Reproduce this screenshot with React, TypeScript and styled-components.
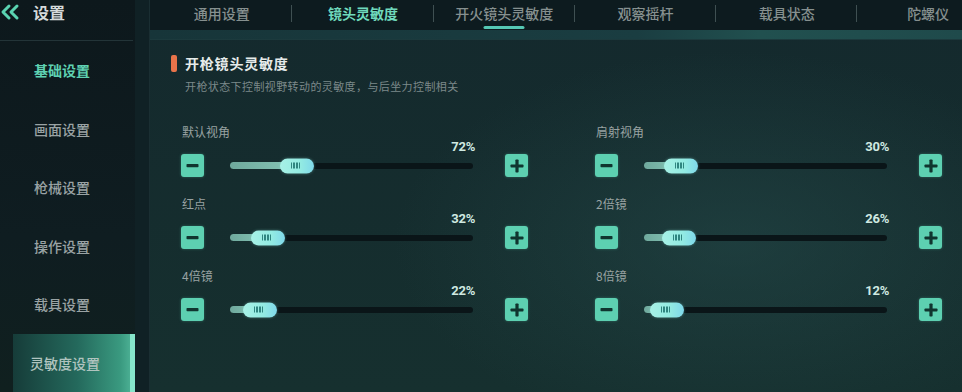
import React from "react";
import styled, { createGlobalStyle } from "styled-components";

const Global = createGlobalStyle`
  html, body { margin: 0; padding: 0; background: #0f1c20; }
  body { font-family: "Noto Sans CJK SC", "Noto Sans", sans-serif; }
  * { box-sizing: border-box; }
`;

const Screen = styled.div`
  width: 962px;
  height: 392px;
  display: flex;
  overflow: hidden;
  background: #0f1c20;
`;

const Sidebar = styled.aside`
  width: 135px;
  flex-shrink: 0;
  display: flex;
  flex-direction: column;
  background: linear-gradient(180deg, #0d181c 0%, #0f1d21 60%, #10201f 100%);
`;

const SideHeader = styled.div`
  height: 41px;
  display: flex;
  align-items: flex-start;
  padding-top: 2px;
  gap: 13px;
  border-bottom: 1px solid #233438;
  margin-right: 2px;
`;

const HeaderTitle = styled.span`
  font-size: 16px;
  font-weight: 700;
  color: #d5dadb;
  line-height: 20px;
`;

const SideItem = styled.div<{ $active?: boolean; $selected?: boolean }>`
  height: 58.6px;
  display: flex;
  align-items: center;
  justify-content: center;
  padding-right: ${(p) => (p.$selected ? "0" : "11px")};
  margin-left: ${(p) => (p.$selected ? "13px" : "0")};
  font-size: 14px;
  font-weight: ${(p) => (p.$active ? 700 : 500)};
  color: ${(p) => (p.$active ? "#5fd2b2" : p.$selected ? "#b0c4bf" : "#9aa3a4")};
  background: ${(p) =>
    p.$selected
      ? "linear-gradient(90deg, #163c39 0%, #24695c 55%, #3a9a80 92%, #4aae92 100%)"
      : "transparent"};
  border-right: ${(p) => (p.$selected ? "5px solid #86e6cb" : "none")};
  & > span { margin-right: ${(p) => (p.$selected ? "13px" : "0")}; }
`;

const Gutter = styled.div`
  width: 15px;
  flex-shrink: 0;
  background: #102125;
  border-right: 1px solid #1a2e32;
`;

const Main = styled.main`
  flex: 1;
  display: flex;
  flex-direction: column;
  min-width: 0;
  background:
    radial-gradient(ellipse 60% 70% at 72% 62%, rgba(40, 80, 80, 0.45), rgba(0,0,0,0) 70%),
    linear-gradient(180deg, #14292d 0%, #16302f 100%);
`;

const TabBar = styled.nav`
  height: 30px;
  display: flex;
  align-items: stretch;
  background: #0d1b1f;
  padding-left: 1px;
`;

const Tab = styled.div<{ $active?: boolean; $underline?: boolean; $divider?: boolean }>`
  width: 141.3px;
  flex-shrink: 0;
  position: relative;
  display: flex;
  align-items: flex-start;
  justify-content: center;
  padding-top: 3px;
  font-size: 14px;
  line-height: 20px;
  white-space: nowrap;
  font-weight: ${(p) => (p.$active ? 700 : 500)};
  color: ${(p) => (p.$active ? "#6fd9bc" : "#86908f")};
  &::after {
    content: "";
    display: ${(p) => (p.$divider ? "block" : "none")};
    position: absolute;
    right: 0;
    top: 5px;
    width: 1px;
    height: 17px;
    background: #3f5052;
  }
  &::before {
    content: "";
    display: ${(p) => (p.$underline ? "block" : "none")};
    position: absolute;
    left: 50%;
    transform: translateX(-50%);
    bottom: 1px;
    width: 41px;
    height: 3px;
    border-radius: 2px;
    background: #55c8b4;
  }
`;

const GlowBand = styled.div`
  height: 10px;
  background: linear-gradient(90deg, #173539 0%, #1a3d41 60%, #21504f 75%, #1f4a4b 100%);
  border-bottom: 1px solid #1c3a3d;
`;

const Content = styled.section`
  flex: 1;
  padding: 14px 0 0 21px;
  display: flex;
  flex-direction: column;
`;

const SectionHead = styled.div`
  display: flex;
  align-items: center;
  gap: 8px;
  height: 18px;
`;

const Accent = styled.span`
  width: 6px;
  height: 17px;
  border-radius: 2px;
  background: #e8734a;
`;

const Title = styled.h2`
  margin: 0;
  font-size: 14px;
  font-weight: 700;
  letter-spacing: 0.8px;
  color: #e6ebea;
  line-height: 18px;
`;

const Subtitle = styled.p`
  margin: 7px 0 0 14px;
  font-size: 11px;
  letter-spacing: 0.4px;
  color: #7c898a;
  line-height: 14px;
`;

const Grid = styled.div`
  margin-top: 30px;
  margin-left: 10px;
  display: grid;
  grid-template-columns: 348px 348px;
  column-gap: 66px;
`;

const Setting = styled.div`
  height: 72px;
  display: flex;
  flex-direction: column;
`;

const Label = styled.div`
  height: 17px;
  padding-left: 1px;
  font-size: 12px;
  color: #98a2a2;
  line-height: 17px;
`;

const Pct = styled.div`
  height: 14px;
  padding-right: 54px;
  text-align: right;
  font-family: Roboto, "Liberation Sans", sans-serif;
  font-size: 13px;
  font-weight: 700;
  letter-spacing: -0.3px;
  color: #cfe9e1;
  line-height: 14px;
`;

const Controls = styled.div`
  display: flex;
  align-items: center;
  height: 23px;
`;

const StepButton = styled.button`
  width: 23px;
  height: 23px;
  padding: 0;
  border: none;
  border-radius: 3px;
  background: #5dd0b1;
  display: flex;
  align-items: center;
  justify-content: center;
  flex-shrink: 0;
  box-shadow: 0 0 3px rgba(93, 208, 177, 0.35);
`;

const Track = styled.div`
  position: relative;
  width: 243px;
  height: 6px;
  margin: 0 32px 0 26px;
  border-radius: 3px;
  background: #0a1518;
`;

const Fill = styled.div`
  position: absolute;
  left: 0;
  top: -0.5px;
  height: 7px;
  border-radius: 4px 0 0 4px;
  background: linear-gradient(90deg, #6fa99d, #86c6b6);
`;

const Knob = styled.div`
  position: absolute;
  top: 50%;
  transform: translateY(-50%);
  width: 34px;
  height: 15px;
  border-radius: 8px;
  background: linear-gradient(90deg, #a7f1e6 0%, #93ebe2 60%, #7fd8ea 100%);
  display: flex;
  align-items: center;
  justify-content: center;
  gap: 1.5px;
  padding-right: 3px;
  box-shadow: 0 0 3px rgba(140, 230, 220, 0.4);
`;

const Groove = styled.span`
  width: 1.3px;
  height: 6px;
  background: #2f8580;
`;

const ChevronIcon = () => (
  <svg width="20" height="18" viewBox="0 0 20 18" style={{ marginTop: 1 }}>
    <path d="M9 3 L3 9 L9 15" stroke="#5ad3b1" strokeWidth="3" fill="none" strokeLinecap="round" strokeLinejoin="round" />
    <path d="M17 3 L11 9 L17 15" stroke="#5ad3b1" strokeWidth="3" fill="none" strokeLinecap="round" strokeLinejoin="round" />
  </svg>
);

const MinusIcon = () => (
  <svg width="13" height="13" viewBox="0 0 13 13">
    <rect x="0.5" y="5" width="12" height="3.2" rx="0.8" fill="#10352f" />
  </svg>
);

const PlusIcon = () => (
  <svg width="14" height="14" viewBox="0 0 14 14">
    <rect x="0.5" y="5.4" width="13" height="3.2" rx="0.8" fill="#10352f" />
    <rect x="5.4" y="0.5" width="3.2" height="13" rx="0.8" fill="#10352f" />
  </svg>
);

type Item = { label: string; value: string; knob: number };

const left: Item[] = [
  { label: "默认视角", value: "72%", knob: 50 },
  { label: "红点", value: "32%", knob: 21 },
  { label: "4倍镜", value: "22%", knob: 13 },
];
const right: Item[] = [
  { label: "肩射视角", value: "30%", knob: 20 },
  { label: "2倍镜", value: "26%", knob: 18 },
  { label: "8倍镜", value: "12%", knob: 6 },
];

const Slider = ({ item }: { item: Item }) => (
  <Setting>
    <Label>{item.label}</Label>
    <Pct>{item.value}</Pct>
    <Controls>
      <StepButton aria-label="减少">
        <MinusIcon />
      </StepButton>
      <Track>
        <Fill style={{ width: item.knob + 17 }} />
        <Knob style={{ left: item.knob }}>
          <Groove />
          <Groove />
          <Groove />
          <Groove />
        </Knob>
      </Track>
      <StepButton aria-label="增加">
        <PlusIcon />
      </StepButton>
    </Controls>
  </Setting>
);

const sideItems = ["基础设置", "画面设置", "枪械设置", "操作设置", "载具设置", "灵敏度设置"];
const tabs = ["通用设置", "镜头灵敏度", "开火镜头灵敏度", "观察摇杆", "载具状态", "陀螺仪"];

export default function App() {
  const rows = left.map((l, i) => [l, right[i]]).flat();
  return (
    <>
      <Global />
      <Screen>
        <Sidebar>
          <SideHeader>
            <ChevronIcon />
            <HeaderTitle>设置</HeaderTitle>
          </SideHeader>
          {sideItems.map((s, i) => (
            <SideItem key={s} $active={i === 0} $selected={i === 5}>
              <span>{s}</span>
            </SideItem>
          ))}
        </Sidebar>
        <Gutter />
        <Main>
          <TabBar>
            {tabs.map((t, i) => (
              <Tab key={t} $active={i === 1} $underline={i === 2} $divider={i < 5}>
                {t}
              </Tab>
            ))}
          </TabBar>
          <GlowBand />
          <Content>
            <SectionHead>
              <Accent />
              <Title>开枪镜头灵敏度</Title>
            </SectionHead>
            <Subtitle>开枪状态下控制视野转动的灵敏度，与后坐力控制相关</Subtitle>
            <Grid>
              {rows.map((r, i) => (
                <Slider key={i} item={r} />
              ))}
            </Grid>
          </Content>
        </Main>
      </Screen>
    </>
  );
}
